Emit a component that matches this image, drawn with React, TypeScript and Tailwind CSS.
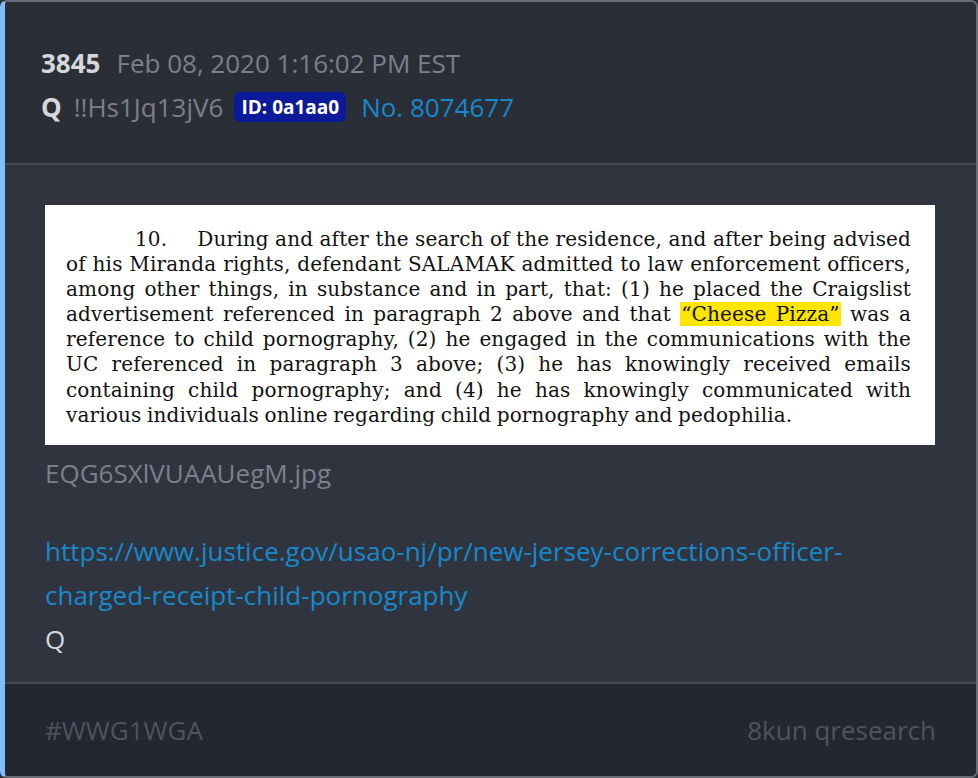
import React from 'react';

const docLines = [
  'of his Miranda rights, defendant SALAMAK admitted to law enforcement officers,',
  'among other things, in substance and in part, that: (1) he placed the Craigslist',
];

const docLinesAfter = [
  'reference to child pornography, (2) he engaged in the communications with the',
  'UC referenced in paragraph 3 above; (3) he has knowingly received emails',
  'containing child pornography; and (4) he has knowingly communicated with',
];

const justify = 'block [text-align-last:justify] text-justify whitespace-nowrap';

const App = () => {
  return (
    <div className="w-[978px] h-[778px] bg-[#2a2e37] font-['Open_Sans',sans-serif]">
      <div className="h-full flex flex-col rounded-[7px] overflow-hidden border-2 border-[#676c76] border-l-[5px] border-l-[#80bfff]">
        {/* header */}
        <div className="h-[161px] shrink-0 bg-[#2a2e37] pl-[36px] pt-[39px]">
          <div className="flex items-center text-[26px] leading-[44px]">
            <span className="font-bold text-[#d6d7da]">3845</span>
            <span className="ml-[16px] text-[#7b808b]">Feb 08, 2020 1:16:02 PM EST</span>
          </div>
          <div className="flex items-center text-[26px] leading-[44px]">
            <span className="font-bold text-[#d6d7da]">Q</span>
            <span className="ml-[12px] text-[#7b808b]">!!Hs1Jq13jV6</span>
            <span className="ml-[11px] px-[7px] h-[30px] flex items-center rounded-[6px] bg-[#0b1a99] text-white font-bold text-[19px]">
              ID: 0a1aa0
            </span>
            <span className="ml-[15px] text-[#1789cc]">No. 8074677</span>
          </div>
        </div>
        <div className="h-[2px] shrink-0 bg-[#464b56]" />

        {/* body */}
        <div className="flex-1 bg-[#2f343e] pl-[40px] pr-[41px] pt-[40px]">
          <div className="bg-white pl-[21px] pr-[24px] pt-[22px] h-[240px] font-['DejaVu_Serif',serif] text-[20px] leading-[25.1px] text-[#111] tracking-[0.15px] [word-spacing:-1px]">
            <span className={justify}>
              <span className="pl-[69px] pr-[30px]">10.</span>During and after the search of the residence, and after being advised
            </span>
            {docLines.map((l) => (
              <span key={l} className={justify}>{l}</span>
            ))}
            <span className={justify}>
              advertisement referenced in paragraph 2 above and that{' '}
              <span className="bg-[#ffe600] px-[1px]">“Cheese Pizza”</span> was a
            </span>
            {docLinesAfter.map((l) => (
              <span key={l} className={justify}>{l}</span>
            ))}
            <span className="block whitespace-nowrap">
              various individuals online regarding child pornography and pedophilia.
            </span>
          </div>
          <div className="mt-[6px] text-[26px] leading-[44px] text-[#7b808b]">EQG6SXlVUAAUegM.jpg</div>
          <div className="mt-[34px] text-[26px] leading-[44px]">
            <a className="text-[#1789cc]">
              https://www.justice.gov/usao-nj/pr/new-jersey-corrections-officer-
              <br />
              charged-receipt-child-pornography
            </a>
            <div className="text-[#d6d7da]">Q</div>
          </div>
        </div>
        <div className="h-[2px] shrink-0 bg-[#464b56]" />

        {/* footer */}
        <div className="h-[92px] shrink-0 bg-[#23272f] px-[40px] flex items-center justify-between text-[26px] text-[#4f5460]">
          <span>#WWG1WGA</span>
          <span>8kun qresearch</span>
        </div>
      </div>
    </div>
  );
};

export default App;
